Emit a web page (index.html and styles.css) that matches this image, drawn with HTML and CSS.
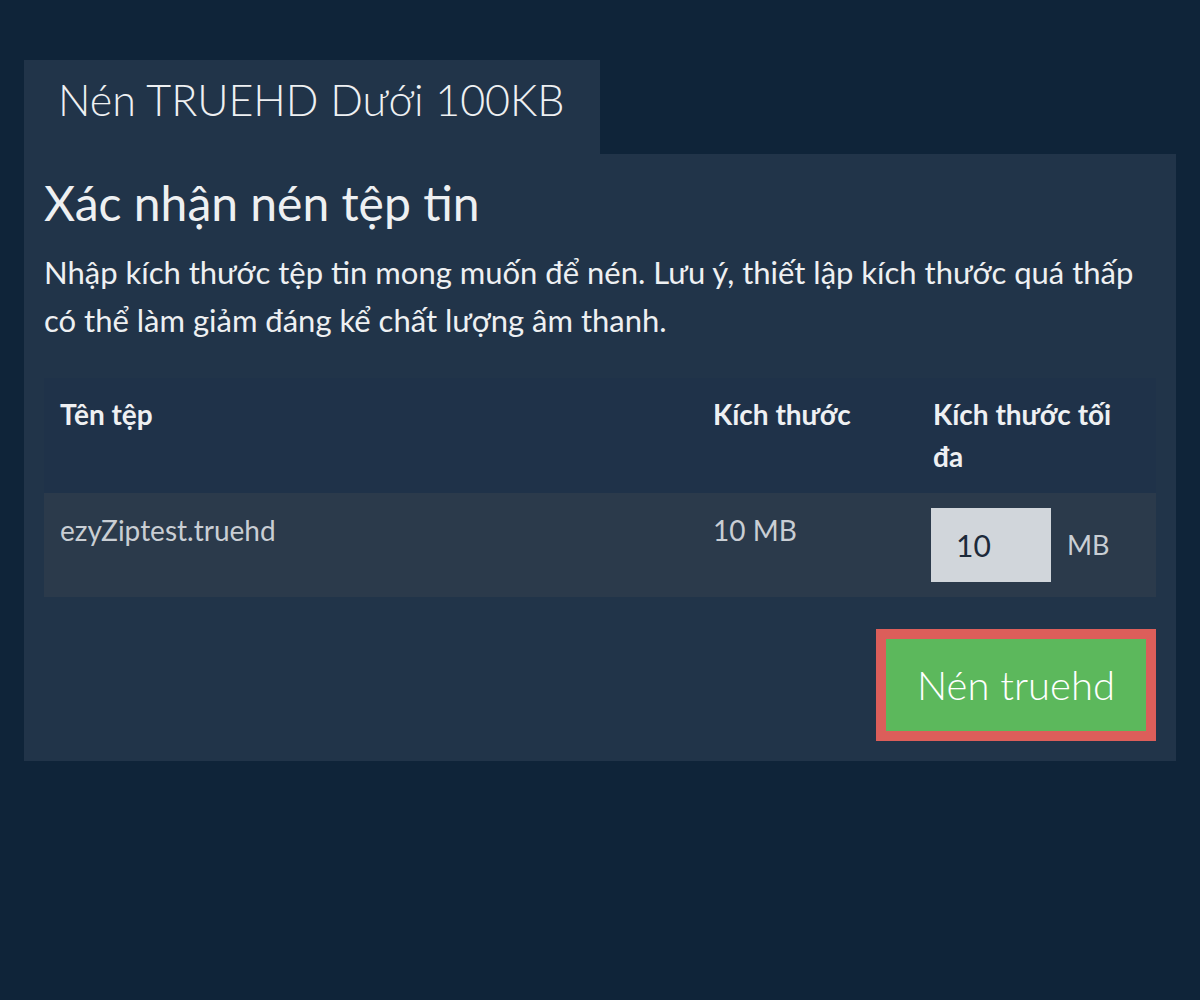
FILE: index.html
```html
<!DOCTYPE html>
<html lang="vi">
<head>
<meta charset="utf-8">
<title>Nén TRUEHD Dưới 100KB</title>
<link rel="stylesheet" href="styles.css">
</head>
<body>
<main class="page">
  <div class="tab">Nén TRUEHD Dưới 100KB</div>
  <section class="panel">
    <h1 class="title">Xác nhận nén tệp tin</h1>
    <p class="desc">Nhập kích thước tệp tin mong muốn để nén. Lưu ý, thiết lập kích thước quá thấp có thể làm giảm đáng kể chất lượng âm thanh.</p>
    <table class="files">
      <thead>
        <tr>
          <th class="col-name">Tên tệp</th>
          <th class="col-size">Kích thước</th>
          <th class="col-max">Kích thước tối đa</th>
        </tr>
      </thead>
      <tbody>
        <tr>
          <td class="col-name">ezyZiptest.truehd</td>
          <td class="col-size">10 MB</td>
          <td class="col-max cell-input"><div class="max-wrap"><input class="max-input" type="text" value="10"><span class="unit">MB</span></div></td>
        </tr>
      </tbody>
    </table>
    <div class="actions">
      <button class="btn" type="button">Nén truehd</button>
    </div>
  </section>
</main>
</body>
</html>
```
FILE: styles.css
```css
html, body {
  margin: 0;
  padding: 0;
}
body {
  background: #0f2439;
  font-family: Lato, "Noto Sans", sans-serif;
  color: #eef0f2;
  height: 1000px;
}
.page {
  padding: 60px 24px 0 24px;
}
.tab {
  display: inline-block;
  box-sizing: border-box;
  width: 576px;
  height: 94px;
  padding: 0 0 0 34px;
  background: #213449;
  font-size: 43px;
  font-weight: 300;
  line-height: 80px;
  color: #eef0f2;
  white-space: nowrap;
}
.panel {
  background: #213449;
  padding: 20px 20px 20px 20px;
}
.title {
  margin: 0;
  font-size: 48px;
  font-weight: 400;
  line-height: 58px;
  color: #eef0f2;
}
.desc {
  margin: 16px 0 34px 0;
  font-size: 31px;
  line-height: 48px;
  color: #eef0f2;
}
.files {
  width: 100%;
  border-collapse: collapse;
  font-size: 28px;
}
.files th {
  background: #1f3249;
  text-align: left;
  font-weight: 700;
  vertical-align: top;
  padding: 15px 16px 16px 16px;
  line-height: 42px;
  color: #eef0f2;
}
.files td {
  background: #2b3a4b;
  vertical-align: top;
  padding: 16px 16px 16px 16px;
  line-height: 42px;
  color: #c9ced4;
}
.files td.cell-input {
  padding: 15px 16px 15px 14px;
}
.col-name { width: 621px; }
.col-size { width: 188px; }
.max-wrap {
  display: flex;
  align-items: center;
  gap: 16px;
}
.max-input {
  box-sizing: border-box;
  width: 120px;
  height: 74px;
  border: 0;
  padding: 0 0 0 25px;
  background: #d1d6db;
  color: #1c2a3a;
  font-family: Lato, "Noto Sans", sans-serif;
  font-size: 30px;
}
.unit {
  font-size: 27px;
  color: #c9ced4;
}
.actions {
  display: flex;
  justify-content: flex-end;
  margin-top: 32px;
}
.btn {
  box-sizing: border-box;
  width: 280px;
  height: 112px;
  border: 10px solid #dc5e5a;
  background: #5cb85c;
  color: #ffffff;
  font-family: Lato, "Noto Sans", sans-serif;
  font-size: 40px;
  font-weight: 300;
  padding: 0;
}
```
